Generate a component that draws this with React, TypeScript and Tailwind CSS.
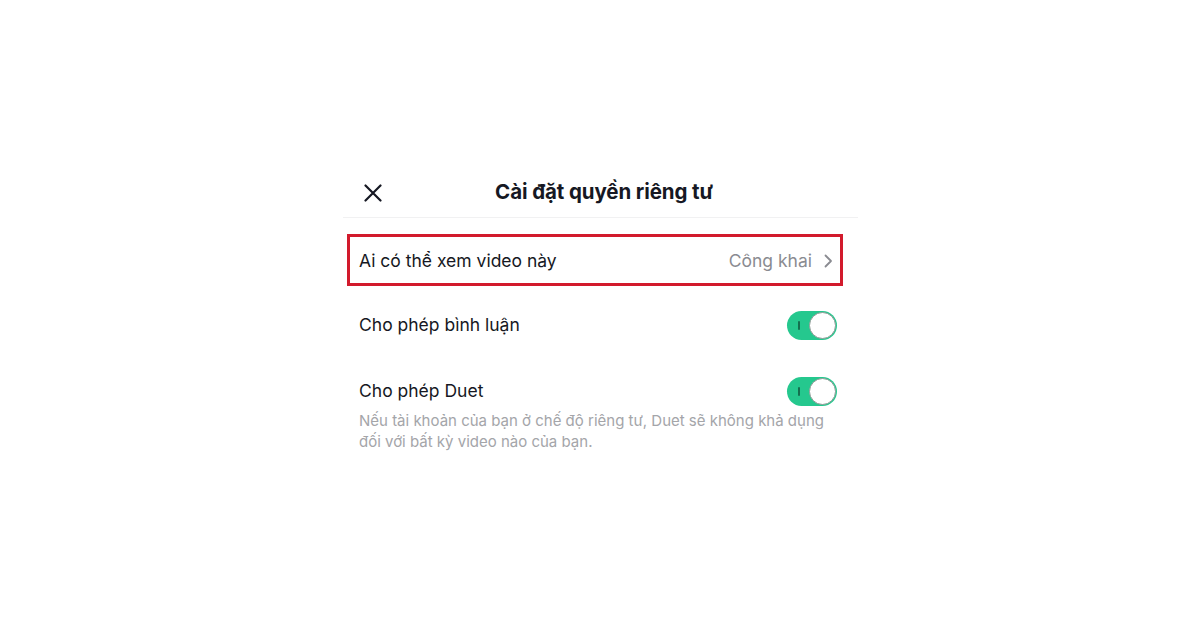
import React from 'react';

interface ToggleProps {
  on: boolean;
}

const Toggle: React.FC<ToggleProps> = ({ on }) => {
  return (
    <div className={`relative w-[50px] h-[29px] rounded-full ${on ? 'bg-[#25c88e]' : 'bg-gray-300'}`}>
      {/* little "I" mark on the green side */}
      <span className="absolute left-[11px] top-[10px] w-[2px] h-[9px] rounded-sm bg-[#14704f]" />
      <span className="absolute right-[1px] top-[1px] w-[27px] h-[27px] rounded-full bg-white border border-[#8f9a96]" />
    </div>
  );
};

const App: React.FC = () => {
  return (
    <div className="w-[1200px] h-[625px] bg-white font-['Inter','Noto_Sans',sans-serif] text-[#161823]">
      <div className="w-[515px] ml-[343px] pt-[168px]">
        {/* Header */}
        <div className="grid grid-cols-[1fr_auto_1fr] items-center h-[50px] border-b border-[#f1f1f2]">
          <div className="pl-[21px]">
            <svg width="18" height="18" viewBox="0 0 18 18" fill="none" stroke="#161823" strokeWidth={2.2} strokeLinecap="round">
              <path d="M1.5 1.5L16.5 16.5M16.5 1.5L1.5 16.5" />
            </svg>
          </div>
          <h1 className="pl-[7px] text-[20.5px] font-bold tracking-[-0.1px]">Cài đặt quyền riêng tư</h1>
          <div />
        </div>

        {/* Highlighted row */}
        <div className="mt-[16px] ml-[4px] mr-[15px] h-[52px] border-[3px] border-[#d21a2c] flex items-center justify-between pl-[9px] pr-[7px]">
          <span className="text-[17.5px] pt-[2px]">Ai có thể xem video này</span>
          <div className="flex items-center gap-[12px] text-[17.5px] text-[#8a8b91] pt-[2px]">
            <span>Công khai</span>
            <svg width="9" height="14" viewBox="0 0 9 14" fill="none" stroke="#8a8b91" strokeWidth={1.8} strokeLinecap="round" strokeLinejoin="round">
              <path d="M1.5 1.5L7 7L1.5 12.5" />
            </svg>
          </div>
        </div>

        <div className="mt-[17px] h-[44px] flex items-center justify-between pl-[16px] pr-[21px]">
          <span className="text-[17.5px] pt-[1px]">Cho phép bình luận</span>
          <Toggle on />
        </div>

        <div className="mt-[25px] h-[38px] flex items-center justify-between pl-[16px] pr-[21px]">
          <span className="text-[17.5px] pt-[1px]">Cho phép Duet</span>
          <Toggle on />
        </div>
        <p className="pl-[16px] pr-[21px] text-[15px] leading-[21px] text-[#a4a5a9]">
          Nếu tài khoản của bạn ở chế độ riêng tư, Duet sẽ không khả dụng
          <br />
          đối với bất kỳ video nào của bạn.
        </p>
      </div>
    </div>
  );
};

export default App;
